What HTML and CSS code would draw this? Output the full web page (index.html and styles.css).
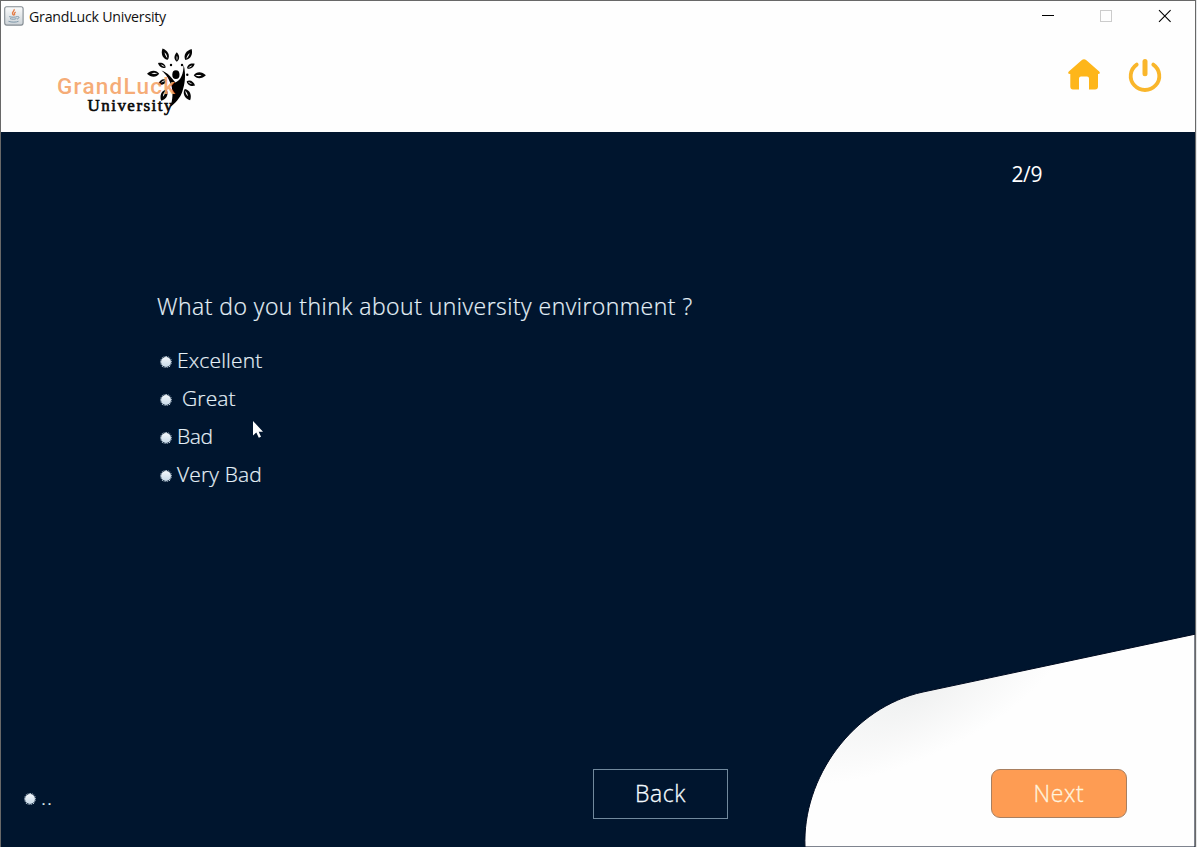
FILE: index.html
```html
<!DOCTYPE html>
<html lang="en">
<head>
<meta charset="utf-8">
<title>GrandLuck University</title>
<link rel="stylesheet" href="styles.css">
</head>
<body>
<div class="window">
  <div class="titlebar">
    <svg class="java" viewBox="0 0 20 20" width="20" height="20">
      <defs><linearGradient id="jg" x1="0" y1="0" x2="0" y2="1"><stop offset="0" stop-color="#fbfcfc"/><stop offset="1" stop-color="#ccd2d7"/></linearGradient></defs>
      <rect x="0.7" y="0.7" width="18.4" height="18.4" rx="2" fill="url(#jg)" stroke="#828a91" stroke-width="1.1"/>
      <path d="M10 3.200c1.200 1.800-2.600 2.800-1.400 4.700.3.700 1 1 .9 1.800M11.700 6c-2 1-1.700 1.800-1 3.200" fill="none" stroke="#e47c47" stroke-width="1.300"/>
      <path d="M5.200 10.600c2 .8 6 .8 8 0M6 12.600c2 .8 4.500.8 6.500 0M13.300 10.600c2.500-.5 2 2-.3 2.500M4.500 15.300c3 1.200 8 1 10 0" fill="none" stroke="#7e98aa" stroke-width="1"/>
    </svg>
    <span class="title">GrandLuck University</span>
    <svg class="controls" viewBox="0 0 132 14" width="132" height="14">
      <path d="M1 6.500h12" stroke="#000"/>
      <rect x="59.500" y="1.500" width="11" height="11" fill="none" stroke="#ccc"/>
      <path d="M118 1.200l11.600 11.600M129.600 1.200L118 12.800" stroke="#000" stroke-width="1.100"/>
    </svg>
  </div>
  <header class="header">
    <svg class="logo" viewBox="54 44 156 76" width="156" height="76">
      <defs>
        <g id="leaf"><path d="M0-7.500C4.600-3 4.900 3.500 0 6.800C-4.900 3.500-4.600-3 0-7.500Z" fill="#050505"/><path d="M.2-2.500C1.300 0 1.200 2 .2 5C-.5 2-.6 0 .2-2.500Z" fill="#fff"/></g>
      </defs>
      <use href="#leaf" transform="translate(165.300 54.400) rotate(-25) scale(.88)"/>
      <use href="#leaf" transform="translate(188.300 54.800) rotate(30) scale(.88)"/>
      <use href="#leaf" transform="translate(176.800 57.300) scale(.66)"/>
      <use href="#leaf" transform="translate(162 65.300) rotate(-60) scale(.62)"/>
      <use href="#leaf" transform="translate(190.700 66.200) rotate(60) scale(.62)"/>
      <use href="#leaf" transform="translate(153.400 73.700) rotate(-90) scale(.85)"/>
      <use href="#leaf" transform="translate(199.500 75.300) rotate(90) scale(.85)"/>
      <use href="#leaf" transform="translate(190.700 83.300) rotate(118) scale(.66)"/>
      <use href="#leaf" transform="translate(187.300 94.300) rotate(155) scale(.88)"/>
      <use href="#leaf" transform="translate(162.500 82) rotate(-118) scale(.68)"/>
      <use href="#leaf" transform="translate(164 94.800) rotate(-155) scale(.88)"/>
      <circle cx="171" cy="65" r="1.200"/><circle cx="182" cy="65" r="1.200"/><circle cx="187.300" cy="74.800" r="1.200"/>
      <ellipse cx="175.900" cy="74.700" rx="3.600" ry="4.400"/>
      <path d="M161.500 70.500C168 72.500 172 78.500 175.500 82.500C181 80 183.500 74 183.600 64.800C186.500 76 184.500 85 182.500 91C180.500 98 175 103 170 107.500C173 100 173 92 171.500 86C169 79 166.500 74.500 161.500 70.500Z"/>
      <text x="57" y="94.300" textLength="118" class="logo-top">GrandLuck</text>
      <text x="87.500" y="110.800" textLength="85" class="logo-sub">University</text>
    </svg>
    <nav class="nav">
      <svg viewBox="0 0 34 34" width="34" height="34" fill="#feb61a">
        <path d="M14.600 2.200Q17 .2 19.400 2.200L32.200 13.400Q34 15.500 31 16H31V28.500Q31 31.500 28 31.500H22V20.500Q22 18.500 20 18.500H14Q12 18.500 12 20.500V31.500H6Q3.300 31.500 3.300 28.500V16H3Q0 15.500 1.800 13.400Z"/>
      </svg>
      <svg viewBox="0 0 34 34" width="34" height="34" fill="none" stroke="#f9b62b" stroke-linecap="round">
        <path d="M8.700 6.600A14.300 14 0 1 0 25.300 6.600" stroke-width="3.800"/><path d="M17 3.500V15.700" stroke-width="5"/>
      </svg>
    </nav>
  </header>
  <main class="body">
    <svg class="swoosh" viewBox="0 0 392 214" width="392" height="214">
      <defs><radialGradient id="sh" gradientUnits="userSpaceOnUse" cx="0" cy="0" r="1" gradientTransform="translate(112 62) rotate(-25) scale(165 62)"><stop offset="0" stop-color="#f0f1f1"/><stop offset="1" stop-color="#fefefe"/></radialGradient></defs>
      <path d="M2 214C-1 145 50 74 120 59L392 1.200V214Z" fill="url(#sh)" stroke="#000b20" stroke-width="1"/>
    </svg>
    <div class="counter">2/9</div>
    <form class="survey">
      <h1 class="question">What do you think about university environment ?</h1>
      <label class="option"><i class="dot"></i><span class="o1">Excellent</span></label>
      <label class="option"><i class="dot"></i><span class="o2">Great</span></label>
      <label class="option"><i class="dot"></i><span class="o3">Bad</span></label>
      <label class="option"><i class="dot"></i><span class="o4">Very Bad</span></label>
    </form>
    <footer class="footer">
      <label class="option extra"><i class="dot"></i><span class="dots">..</span></label>
      <button class="btn back">Back</button>
      <button class="btn next">Next</button>
    </footer>
    <svg class="cursor" viewBox="0 0 12 19" width="12" height="19"><path d="M1 1V15.500L4.300 12.500L6.800 17.800L9 16.800L6.700 11.700H11Z" fill="#fff"/></svg>
  </main>
</div>
</body>
</html>
```
FILE: styles.css
```css
* { box-sizing: border-box; }
body { margin: 0; background: #e4e6e8; overflow: hidden; font-family: "Open Sans", "Noto Sans", sans-serif; }
.window { width: 1196px; height: 847px; border: 1px solid #686868; border-bottom: 0; background: #fefefe; display: flex; flex-direction: column; }
.titlebar { height: 31px; display: flex; align-items: center; padding: 0 22px 0 3px; }
.java { margin-top: -2px; }
.title { margin-left: 5px; font-size: 14.2px; letter-spacing: -0.22px; color: #111; white-space: nowrap; }
.controls { margin-left: auto; margin-top: -1px; }
.header { height: 100px; display: flex; justify-content: space-between; padding: 12px 33px 0 53px; }
.logo-top { font: 500 22.5px Roboto, sans-serif; fill: #f5a46a; fill-opacity: .92; }
.logo-sub { font: 17px "Liberation Serif", serif; fill: #080808; stroke: #080808; stroke-width: .6px; }
.nav { display: flex; gap: 27px; padding-top: 14px; }
.body { position: relative; flex: 1; display: flex; flex-direction: column; background: #00152e; color: #e6f1f8; }
.swoosh { position: absolute; right: 0; bottom: 0; }
.counter { padding: 28px 153px 0 0; text-align: right; font-size: 21px; letter-spacing: -0.4px; line-height: 28px; color: #fff; }
.survey { padding: 99px 0 0 156px; }
.question { margin: 0 0 16px; font-size: 23px; font-weight: 300; line-height: 38px; letter-spacing: 0.47px; white-space: nowrap; -webkit-text-stroke: 0.2px; }
.option { display: flex; align-items: center; height: 38px; font-size: 21px; font-weight: 300; white-space: pre; padding-left: 3px; -webkit-text-stroke: 0.2px; }
.dot { width: 12px; height: 12px; border-radius: 50%; margin: 3px 5px 0 0; background: linear-gradient(#f4f8fc, #c6d8e7) padding-box; border: 1px dotted #cbdce8; }
.o1, .o4 { letter-spacing: 0.15px; }
.o2 { padding-left: 5px; letter-spacing: 0.15px; }
.o3 { letter-spacing: -0.4px; }
.dots { letter-spacing: 1px; }
.footer { position: relative; margin-top: auto; height: 78px; display: flex; align-items: flex-start; padding-right: 68px; }
.extra { width: 592px; padding-left: 23px; margin-top: 9px; }
.btn { font: 300 23px "Open Sans", sans-serif; letter-spacing: 0.6px; padding: 0 0 2px; -webkit-text-stroke: 0.3px; }
.back { width: 135px; height: 50px; background: transparent; border: 1px solid #71899d; color: #f4fbff; }
.next { width: 136px; height: 49px; margin-left: auto; background: #fe9c53; border: 1px solid #a87f60; border-radius: 9px; color: #fff4df; }
.cursor { position: absolute; left: 251px; top: 288px; }
```
